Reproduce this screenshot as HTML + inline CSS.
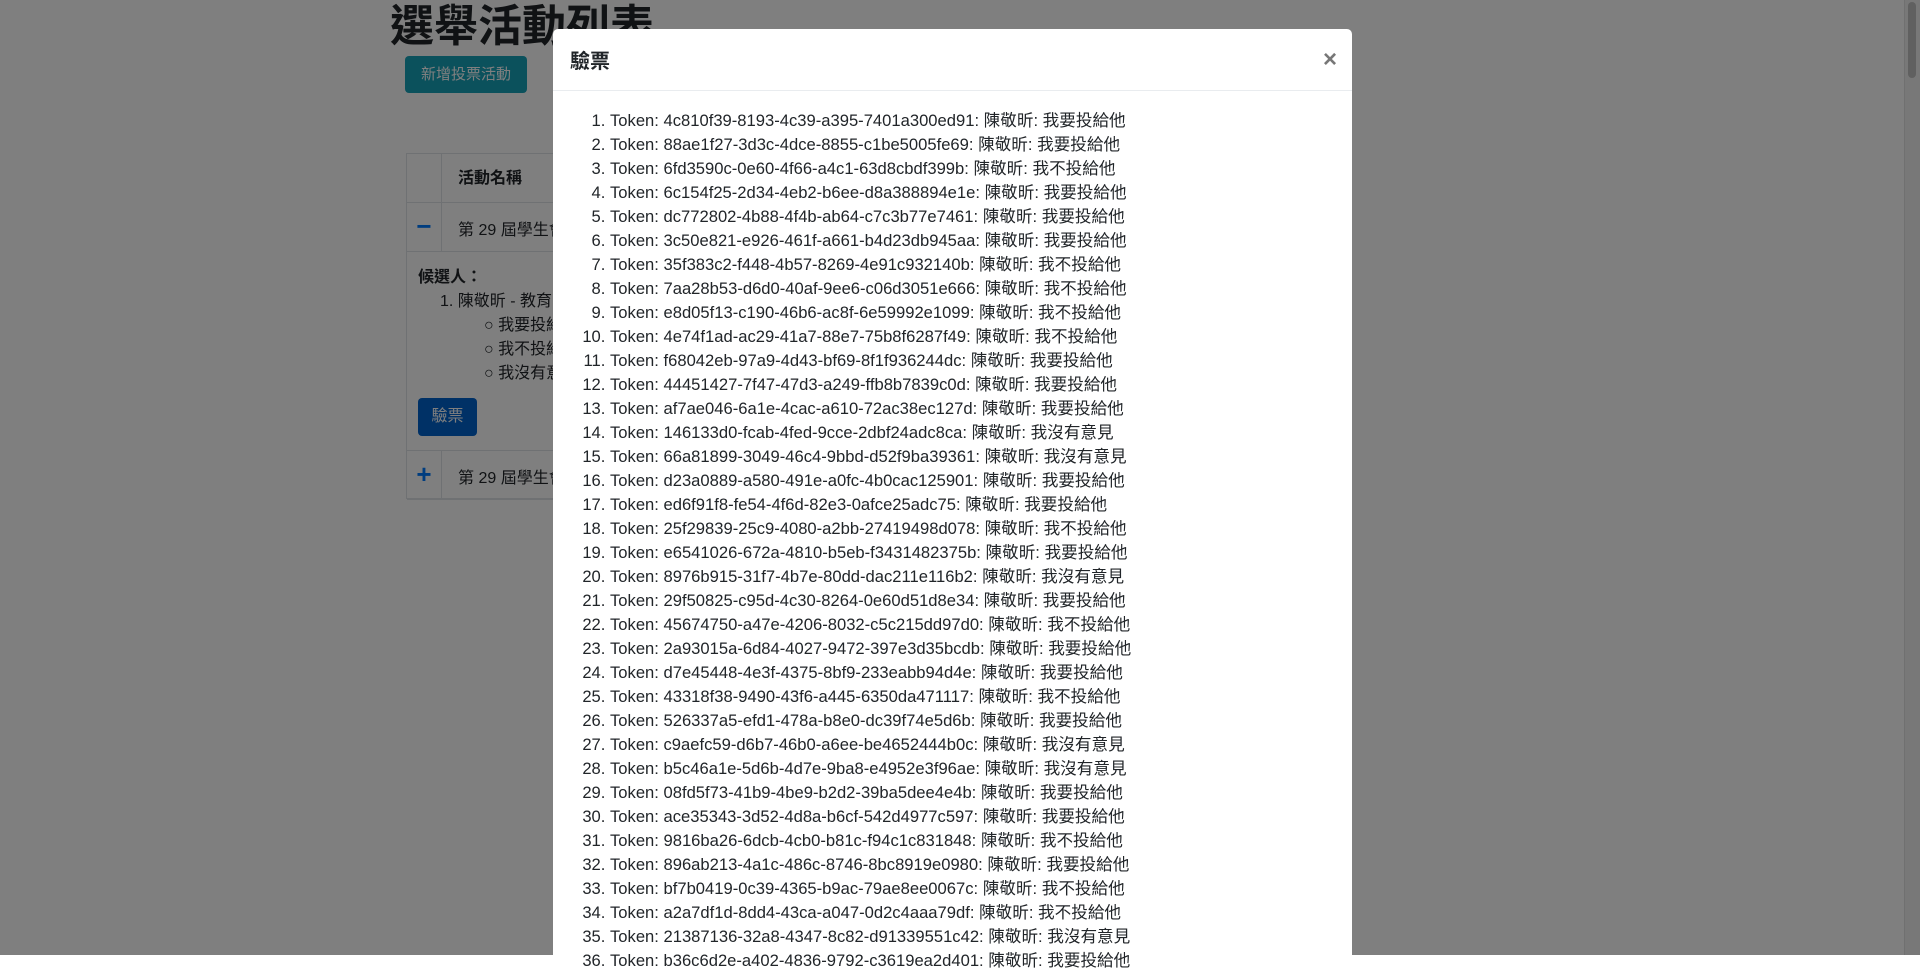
<!DOCTYPE html>
<html><head><meta charset="utf-8"><style>
*{box-sizing:border-box}
body{margin:0;width:1920px;height:955px;overflow:hidden;background:#fff;font-family:"Liberation Sans","Noto Sans CJK TC",sans-serif;color:#212529;position:relative}
.abs{position:absolute}
h1{position:absolute;left:390px;top:-8px;margin:0;font-size:44px;font-weight:bold;font-family:"Noto Sans CJK TC",sans-serif;line-height:60px}
.btn1{left:405px;top:56px;width:122px;height:37px;background:#17a2b8;color:#fff;border-radius:4px;font-size:15px;text-align:center;line-height:37px}
.tbl{left:406px;top:153px;width:600px;height:346px;border:1px solid #dee2e6}
.row{position:absolute;left:0;width:100%;border-bottom:1px solid #dee2e6}
.ic{position:absolute;left:0;width:35px;height:100%;border-right:1px solid #dee2e6;color:#007bff;font-size:26px;font-weight:bold;text-align:center}
.ov{left:0;top:0;width:1920px;height:955px;background:rgba(0,0,0,.5)}
.sb{left:1904px;top:0;width:16px;height:955px;background:#f1f1f1;border-left:1px solid #e0e0e0}
.th{left:1908px;top:2px;width:8px;height:76px;background:#c1c1c1;border-radius:4px}
.modal{left:553px;top:29px;width:799px;height:940px;background:#fff;border-radius:5px}
.mh{height:62px;border-bottom:1px solid #e9ecef;position:relative}
.mh .t{position:absolute;left:17px;top:20px;font-size:20px;font-weight:bold;line-height:26px}
.mh .x{position:absolute;right:15px;top:17px;font-size:24px;font-weight:bold;color:#777}
ol{margin:0;padding:18px 0 0 57px;font-size:16.6px;line-height:24px}
</style></head><body>
<h1>選舉活動列表</h1>
<div class="abs btn1">新增投票活動</div>
<div class="abs tbl">
 <div class="row" style="top:0;height:49px"><div class="ic"></div><div class="abs" style="left:51px;top:10px;font-weight:bold;font-size:16px">活動名稱</div></div>
 <div class="row" style="top:49px;height:49px"><div class="ic" style="line-height:46px">−</div><div class="abs" style="left:51px;top:13px;font-size:16px">第 29 屆學生會</div></div>
 <div class="row" style="top:98px;height:199px;font-size:16px">
  <div class="abs" style="left:11px;top:11px;font-weight:bold">候選人：</div>
  <div class="abs" style="left:33px;top:35px">1. 陳敬昕 - 教育</div>
  <div class="abs" style="left:77px;top:59px">○ 我要投給</div>
  <div class="abs" style="left:77px;top:83px">○ 我不投給</div>
  <div class="abs" style="left:77px;top:107px">○ 我沒有意</div>
  <div class="abs" style="left:11px;top:146px;width:59px;height:38px;background:#0062cc;color:#fff;border-radius:4px;text-align:center;line-height:38px">驗票</div>
 </div>
 <div class="row" style="top:297px;height:49px"><div class="ic" style="line-height:46px">+</div><div class="abs" style="left:51px;top:13px;font-size:16px">第 29 屆學生會</div></div>
</div>
<div class="abs sb"></div><div class="abs th"></div>
<div class="abs ov"></div>
<div class="abs modal">
 <div class="mh"><div class="t">驗票</div><div class="x">×</div></div>
 <ol>
<li>Token: 4c810f39-8193-4c39-a395-7401a300ed91: 陳敬昕: 我要投給他</li>
<li>Token: 88ae1f27-3d3c-4dce-8855-c1be5005fe69: 陳敬昕: 我要投給他</li>
<li>Token: 6fd3590c-0e60-4f66-a4c1-63d8cbdf399b: 陳敬昕: 我不投給他</li>
<li>Token: 6c154f25-2d34-4eb2-b6ee-d8a388894e1e: 陳敬昕: 我要投給他</li>
<li>Token: dc772802-4b88-4f4b-ab64-c7c3b77e7461: 陳敬昕: 我要投給他</li>
<li>Token: 3c50e821-e926-461f-a661-b4d23db945aa: 陳敬昕: 我要投給他</li>
<li>Token: 35f383c2-f448-4b57-8269-4e91c932140b: 陳敬昕: 我不投給他</li>
<li>Token: 7aa28b53-d6d0-40af-9ee6-c06d3051e666: 陳敬昕: 我不投給他</li>
<li>Token: e8d05f13-c190-46b6-ac8f-6e59992e1099: 陳敬昕: 我不投給他</li>
<li>Token: 4e74f1ad-ac29-41a7-88e7-75b8f6287f49: 陳敬昕: 我不投給他</li>
<li>Token: f68042eb-97a9-4d43-bf69-8f1f936244dc: 陳敬昕: 我要投給他</li>
<li>Token: 44451427-7f47-47d3-a249-ffb8b7839c0d: 陳敬昕: 我要投給他</li>
<li>Token: af7ae046-6a1e-4cac-a610-72ac38ec127d: 陳敬昕: 我要投給他</li>
<li>Token: 146133d0-fcab-4fed-9cce-2dbf24adc8ca: 陳敬昕: 我沒有意見</li>
<li>Token: 66a81899-3049-46c4-9bbd-d52f9ba39361: 陳敬昕: 我沒有意見</li>
<li>Token: d23a0889-a580-491e-a0fc-4b0cac125901: 陳敬昕: 我要投給他</li>
<li>Token: ed6f91f8-fe54-4f6d-82e3-0afce25adc75: 陳敬昕: 我要投給他</li>
<li>Token: 25f29839-25c9-4080-a2bb-27419498d078: 陳敬昕: 我不投給他</li>
<li>Token: e6541026-672a-4810-b5eb-f3431482375b: 陳敬昕: 我要投給他</li>
<li>Token: 8976b915-31f7-4b7e-80dd-dac211e116b2: 陳敬昕: 我沒有意見</li>
<li>Token: 29f50825-c95d-4c30-8264-0e60d51d8e34: 陳敬昕: 我要投給他</li>
<li>Token: 45674750-a47e-4206-8032-c5c215dd97d0: 陳敬昕: 我不投給他</li>
<li>Token: 2a93015a-6d84-4027-9472-397e3d35bcdb: 陳敬昕: 我要投給他</li>
<li>Token: d7e45448-4e3f-4375-8bf9-233eabb94d4e: 陳敬昕: 我要投給他</li>
<li>Token: 43318f38-9490-43f6-a445-6350da471117: 陳敬昕: 我不投給他</li>
<li>Token: 526337a5-efd1-478a-b8e0-dc39f74e5d6b: 陳敬昕: 我要投給他</li>
<li>Token: c9aefc59-d6b7-46b0-a6ee-be4652444b0c: 陳敬昕: 我沒有意見</li>
<li>Token: b5c46a1e-5d6b-4d7e-9ba8-e4952e3f96ae: 陳敬昕: 我沒有意見</li>
<li>Token: 08fd5f73-41b9-4be9-b2d2-39ba5dee4e4b: 陳敬昕: 我要投給他</li>
<li>Token: ace35343-3d52-4d8a-b6cf-542d4977c597: 陳敬昕: 我要投給他</li>
<li>Token: 9816ba26-6dcb-4cb0-b81c-f94c1c831848: 陳敬昕: 我不投給他</li>
<li>Token: 896ab213-4a1c-486c-8746-8bc8919e0980: 陳敬昕: 我要投給他</li>
<li>Token: bf7b0419-0c39-4365-b9ac-79ae8ee0067c: 陳敬昕: 我不投給他</li>
<li>Token: a2a7df1d-8dd4-43ca-a047-0d2c4aaa79df: 陳敬昕: 我不投給他</li>
<li>Token: 21387136-32a8-4347-8c82-d91339551c42: 陳敬昕: 我沒有意見</li>
<li>Token: b36c6d2e-a402-4836-9792-c3619ea2d401: 陳敬昕: 我要投給他</li>
 </ol>
</div>
</body></html>
